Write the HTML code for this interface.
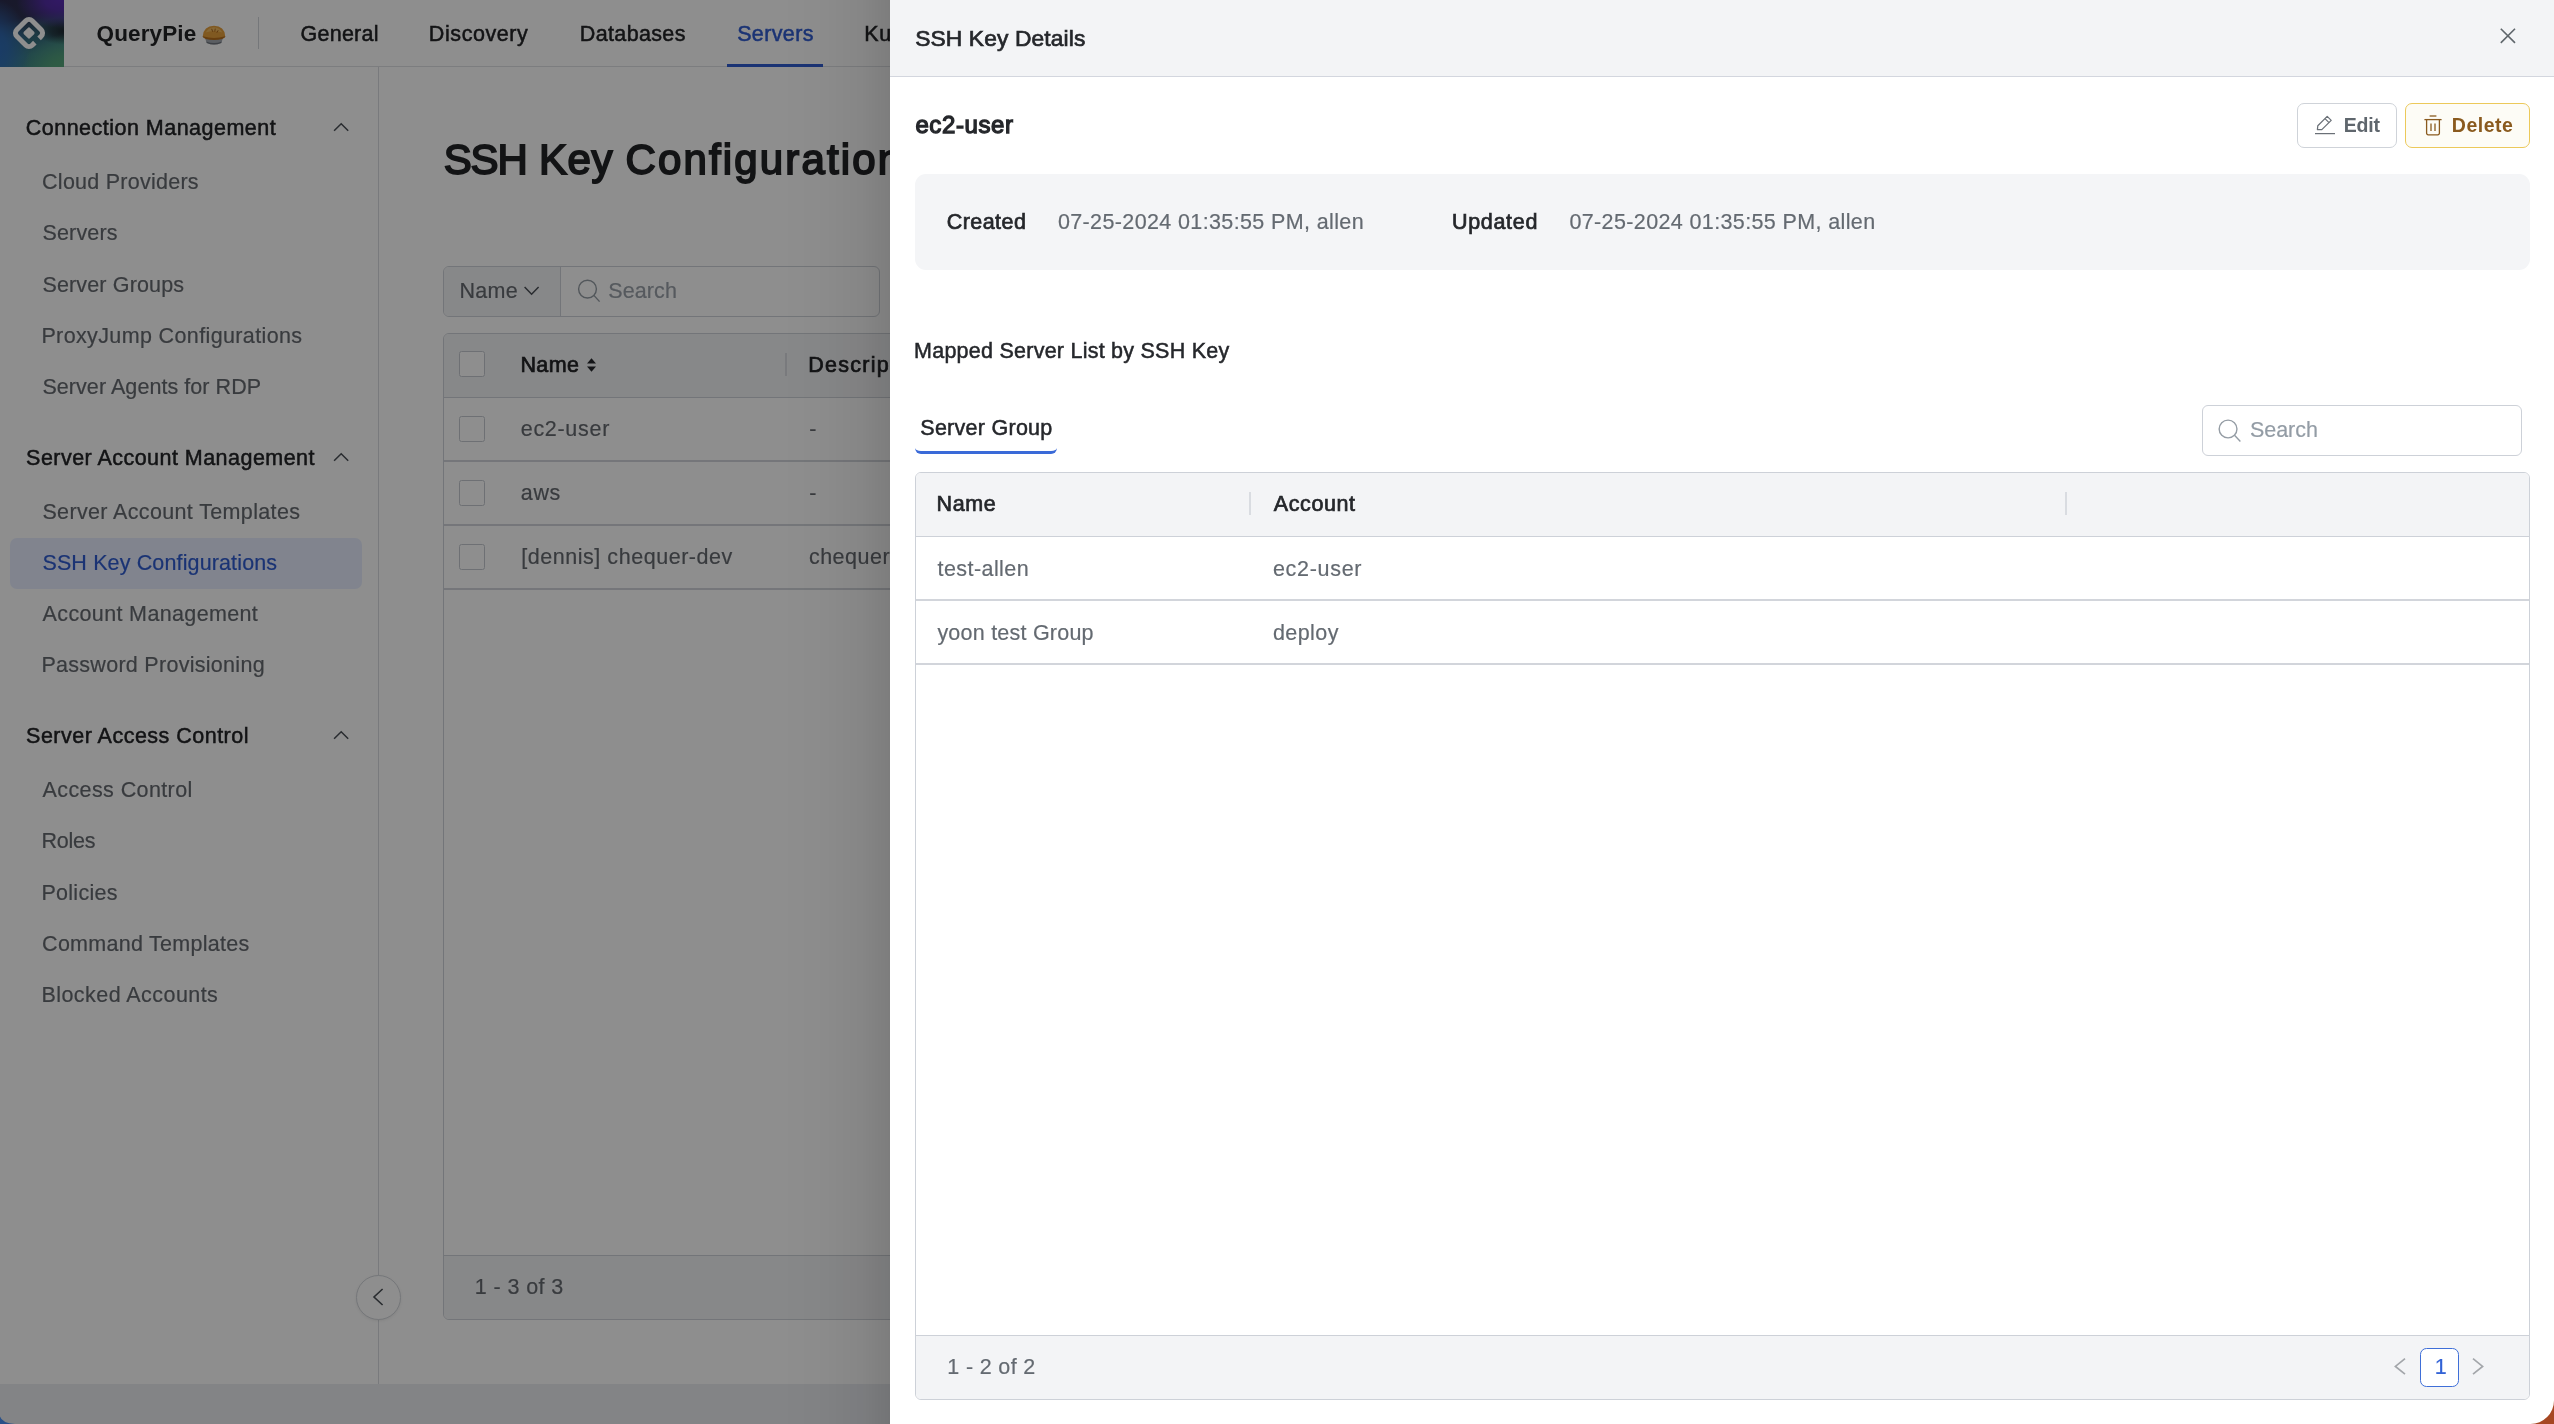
<!DOCTYPE html>
<html lang="en">
<head>
<meta charset="utf-8">
<title>SSH Key Configurations - QueryPie</title>
<style>
*{box-sizing:border-box;margin:0;padding:0}
html,body{width:2554px;height:1424px;overflow:hidden;background:#fff;font-family:'Liberation Sans',sans-serif}
.abs,.t,svg.i{position:absolute}
.t{white-space:pre;line-height:1;display:block}
.tl{position:absolute;left:0;top:0;width:2554px;height:1424px;will-change:transform}
#page{position:absolute;left:0;top:0;width:2554px;height:1424px;background:#fff;overflow:hidden}
#overlay{position:absolute;left:0;top:0;width:2554px;height:1424px;background:rgba(0,0,0,.445)}
#shadow{position:absolute;left:780px;top:0;width:110px;height:1424px;background:linear-gradient(90deg,rgba(0,0,0,0) 0%,rgba(0,0,0,.02) 40%,rgba(0,0,0,.06) 75%,rgba(0,0,0,.12) 100%)}
#drawer{position:absolute;left:890px;top:0;width:1664px;height:1424px;background:#fff;overflow:hidden}
#drawer .in{position:absolute;left:-890px;top:0;width:2554px;height:1424px}
.nav{left:0;top:0;width:2554px;height:67px;background:#fff;border-bottom:1px solid #dfe1e5}
.logo{left:0;top:0;width:64px;height:66.5px;background:
 radial-gradient(ellipse 44px 28px at 60px 0px,#5a2db4 0%,rgba(90,45,180,.85) 35%,rgba(90,45,180,0) 100%),
 radial-gradient(ellipse 46px 38px at 68px 72px,#58a878 0%,rgba(88,168,120,.8) 40%,rgba(88,168,120,0) 100%),
 radial-gradient(ellipse 30px 14px at 66px 31px,rgba(28,32,40,.95) 0%,rgba(28,32,40,.6) 50%,rgba(28,32,40,0) 100%),
 radial-gradient(ellipse 38px 52px at -8px 50px,#2f6cbc 0%,rgba(47,108,188,.8) 40%,rgba(47,108,188,0) 100%),
 linear-gradient(165deg,#2c2c4c 0%,#2d3250 28%,#35687a 52%,#3d8088 75%,#3f8a86 100%)}
.vsep{left:257.5px;top:17px;width:1.5px;height:32px;background:#d3d6db}
.navul{left:727px;top:64px;width:96px;height:3px;background:#305cd0}
.side{left:0;top:67px;width:379px;height:1317px;border-right:1px solid #d9dce0;background:#fff}
.sel{left:10px;top:538px;width:352px;height:51px;border-radius:7px;background:#e7eeff}
.sgroup{left:443px;top:266px;width:437px;height:51px;border:1px solid #cfd3d9;border-radius:6px;background:#fff;overflow:hidden}
.sgroup .l{position:absolute;left:0;top:0;width:117px;height:49px;background:#f3f4f6;border-right:1px solid #cfd3d9}
.mtable{left:443px;top:333px;width:2060px;height:987px;border:1px solid #cfd3d9;border-radius:6px;background:#fff;overflow:hidden}
.mtable .h{position:absolute;left:0;top:0;width:100%;height:64px;background:#f3f4f6;border-bottom:1px solid #cfd3d9}
.mtable .r{position:absolute;left:0;width:100%;height:2px;background:#d2d5db}
.mtable .f{position:absolute;left:0;top:921px;width:100%;height:64px;background:#f3f4f6;border-top:1px solid #cfd3d9}
.cb{width:26px;height:26px;border:1px solid #c6cad1;border-radius:2.5px;background:#fff;left:459px}
.csep{width:2px;height:23px;background:#d9dce1}
.circ{left:356px;top:1275px;width:45px;height:45px;border-radius:50%;background:#fff;border:1px solid #d3d6db;box-shadow:0 1px 3px rgba(0,0,0,.08)}
.bbar{left:0;top:1384px;width:2554px;height:40px;background:#ebedf1}
/* drawer */
.dh{left:890px;top:0;width:1664px;height:77px;background:#f3f4f6;border-bottom:1.5px solid #d3d6de}
.btn{top:103px;height:45px;border-radius:7px}
.bedit{left:2297px;width:99.5px;border:1.5px solid #cfd3d9;background:#fff}
.bdel{left:2405px;width:125px;border:1.5px solid #ecc95a;background:#fdfcf6}
.info{left:915px;top:174px;width:1615px;height:96px;border-radius:11px;background:#f4f5f7}
.tabul{left:915px;top:442px;width:142px;height:12px;border-bottom:3px solid #3a6ad8;border-radius:0 0 6px 6px}
.dsearch{left:2202px;top:405px;width:320px;height:51px;border:1px solid #cdd1d8;border-radius:6px;background:#fff}
.dtable{left:915px;top:472px;width:1615px;height:928px;border:1px solid #cdd1d8;border-radius:6px;background:#fff;overflow:hidden}
.dtable .h{position:absolute;left:0;top:0;width:100%;height:64px;background:#f3f4f6;border-bottom:1px solid #cdd1d8}
.dtable .r{position:absolute;left:0;width:100%;height:2px;background:#d2d5db}
.dtable .f{position:absolute;left:0;top:862px;width:100%;height:64px;background:#f3f4f6;border-top:1px solid #cdd1d8}
.pg{left:2420px;top:1348px;width:39px;height:39px;border:1.5px solid #3f6fd8;border-radius:6.5px;background:#fff}
.corner{position:absolute;bottom:0;width:24px;height:24px}
</style>
</head>
<body>
<div id="page">
  <div class="abs nav"></div>
  <div class="abs logo"></div>
  <svg class="i" style="left:11px;top:15px" width="36" height="36" viewBox="-18 -18 36 36" aria-label="QueryPie logo">
    <g transform="rotate(45)" fill="none" stroke="#fff" stroke-width="5">
      <path d="M10.9 2.7 V6.4 A4.5 4.5 0 0 1 6.4 10.9 H-6.4 A4.5 4.5 0 0 1 -10.9 6.4 V-6.4 A4.5 4.5 0 0 1 -6.4 -10.9 H6.4 A4.5 4.5 0 0 1 10.9 -6.4 V-3.3"/>
      <rect x="-4.4" y="-4.4" width="8.8" height="8.8" rx="1.6" fill="#fff" stroke="none"/>
    </g>
  </svg>
  <!-- pie emoji drawn as svg -->
  <svg class="i" style="left:201px;top:24px" width="26" height="24" viewBox="0 0 26 24" role="img" aria-label="🥧">
    <path d="M3.4 12.5 L5.8 19 Q13 22.2 20.2 19 L22.6 12.5 Z" fill="#a3a9b1"/>
    <path d="M5.2 17.4 Q13 20.8 20.8 17.4 L20.2 19 Q13 22.2 5.8 19Z" fill="#70767e"/>
    <ellipse cx="13" cy="12.6" rx="11.4" ry="3.4" fill="#b9701c"/>
    <path d="M1.8 12.2 Q2.6 2 13 1.8 Q23.4 2 24.2 12.2 Q13 15.6 1.8 12.2Z" fill="#e6a03c"/>
    <path d="M4.6 8.6 Q7 3.6 13 3.2 Q19 3.6 21.4 8.6 Q13 5.6 4.6 8.6Z" fill="#f3c065" opacity=".85"/>
    <path d="M10.8 5.2l.8 2.2M14.2 5l-.4 2.2M17 6.6l-1 1.8" stroke="#a8601a" stroke-width=".9" fill="none" stroke-linecap="round"/>
  </svg>
  <div class="abs vsep"></div>
  <div class="abs navul"></div>
  <div class="abs side"></div>
  <div class="abs sel"></div>
  <!-- sidebar chevrons -->
  <svg class="i" style="left:333px;top:121px" width="16" height="12" viewBox="0 0 16 12"><path d="M1.1 9.8 L8.2 2.8 L15.2 9.8" fill="none" stroke="#4b5057" stroke-width="1.55"/></svg>
  <svg class="i" style="left:333px;top:451px" width="16" height="12" viewBox="0 0 16 12"><path d="M1.1 9.8 L8.2 2.8 L15.2 9.8" fill="none" stroke="#4b5057" stroke-width="1.55"/></svg>
  <svg class="i" style="left:333px;top:729px" width="16" height="12" viewBox="0 0 16 12"><path d="M1.1 9.8 L8.2 2.8 L15.2 9.8" fill="none" stroke="#4b5057" stroke-width="1.55"/></svg>
  <!-- search group -->
  <div class="abs sgroup"><div class="l"></div></div>
  <svg class="i" style="left:523px;top:284px" width="17" height="14" viewBox="0 0 17 14"><path d="M1.6 3 L8.6 10.2 L15.6 3" fill="none" stroke="#4a4f56" stroke-width="1.5"/></svg>
  <svg class="i" style="left:576px;top:278px" width="26" height="26" viewBox="0 0 26 26"><circle cx="11.5" cy="11.1" r="8.9" fill="none" stroke="#949ca4" stroke-width="1.4"/><path d="M17.9 17.4 L23.6 23.6" stroke="#949ca4" stroke-width="1.4" fill="none"/></svg>
  <!-- main table -->
  <div class="abs mtable"><div class="h"></div>
    <div class="r" style="top:126px"></div><div class="r" style="top:190px"></div><div class="r" style="top:254px"></div>
    <div class="f"></div></div>
  <div class="abs cb" style="top:351px"></div>
  <div class="abs cb" style="top:416px"></div>
  <div class="abs cb" style="top:480px"></div>
  <div class="abs cb" style="top:544px"></div>
  <svg class="i" style="left:586px;top:357px" width="11" height="16" viewBox="0 0 11 16"><path d="M5.5 1.2 L10 6.4 H1Z M5.5 14.8 L10 9.6 H1Z" fill="#25272b"/></svg>
  <div class="abs csep" style="left:785px;top:353px"></div>
  <div class="abs circ"></div>
  <svg class="i" style="left:370px;top:1287px" width="16" height="20" viewBox="0 0 16 20"><path d="M12.6 2 L4 10 L12.6 18" fill="none" stroke="#4a4f55" stroke-width="1.6"/></svg>
  <div class="abs bbar"></div>
<div class="tl">
<span class="t" id="t0" style="left:96.60px;top:23.45px;font-size:22.5px;font-weight:700;color:#232427;letter-spacing:0.109px;">QueryPie</span>
<span class="t" id="t1" style="left:300.54px;top:23.70px;font-size:21.5px;font-weight:400;color:#232427;letter-spacing:0.239px;-webkit-text-stroke:0.5px #232427;">General</span>
<span class="t" id="t2" style="left:428.87px;top:23.70px;font-size:21.5px;font-weight:400;color:#232427;letter-spacing:0.575px;-webkit-text-stroke:0.5px #232427;">Discovery</span>
<span class="t" id="t3" style="left:579.87px;top:23.70px;font-size:21.5px;font-weight:400;color:#232427;letter-spacing:0.346px;-webkit-text-stroke:0.5px #232427;">Databases</span>
<span class="t" id="t4" style="left:737.18px;top:23.70px;font-size:21.5px;font-weight:400;color:#305cd0;letter-spacing:0.362px;-webkit-text-stroke:0.5px #305cd0;">Servers</span>
<span class="t" id="t5" style="left:864.27px;top:23.70px;font-size:21.5px;font-weight:400;color:#232427;letter-spacing:0.765px;-webkit-text-stroke:0.5px #232427;">Kubernetes</span>
<span class="t" id="t6" style="left:25.74px;top:117.70px;font-size:21.5px;font-weight:400;color:#232427;letter-spacing:0.485px;-webkit-text-stroke:0.5px #232427;">Connection Management</span>
<span class="t" id="t7" style="left:26.08px;top:447.70px;font-size:21.5px;font-weight:400;color:#232427;letter-spacing:0.465px;-webkit-text-stroke:0.5px #232427;">Server Account Management</span>
<span class="t" id="t8" style="left:26.08px;top:725.70px;font-size:21.5px;font-weight:400;color:#232427;letter-spacing:0.486px;-webkit-text-stroke:0.5px #232427;">Server Access Control</span>
<span class="t" id="t9" style="left:42.09px;top:171.70px;font-size:21.5px;font-weight:400;color:#666a70;letter-spacing:0.252px;-webkit-text-stroke:0.2px #666a70;">Cloud Providers</span>
<span class="t" id="t10" style="left:42.43px;top:223.40px;font-size:21.5px;font-weight:400;color:#666a70;letter-spacing:0.178px;-webkit-text-stroke:0.2px #666a70;">Servers</span>
<span class="t" id="t11" style="left:42.43px;top:274.90px;font-size:21.5px;font-weight:400;color:#666a70;letter-spacing:0.153px;-webkit-text-stroke:0.2px #666a70;">Server Groups</span>
<span class="t" id="t12" style="left:41.42px;top:325.70px;font-size:21.5px;font-weight:400;color:#666a70;letter-spacing:0.370px;-webkit-text-stroke:0.2px #666a70;">ProxyJump Configurations</span>
<span class="t" id="t13" style="left:42.43px;top:376.70px;font-size:21.5px;font-weight:400;color:#666a70;letter-spacing:0.061px;-webkit-text-stroke:0.2px #666a70;">Server Agents for RDP</span>
<span class="t" id="t14" style="left:42.43px;top:501.70px;font-size:21.5px;font-weight:400;color:#666a70;letter-spacing:0.356px;-webkit-text-stroke:0.2px #666a70;">Server Account Templates</span>
<span class="t" id="t15" style="left:42.43px;top:552.70px;font-size:21.5px;font-weight:400;color:#305cd0;letter-spacing:0.134px;-webkit-text-stroke:0.2px #305cd0;">SSH Key Configurations</span>
<span class="t" id="t16" style="left:42.60px;top:603.70px;font-size:21.5px;font-weight:400;color:#666a70;letter-spacing:0.357px;-webkit-text-stroke:0.2px #666a70;">Account Management</span>
<span class="t" id="t17" style="left:41.42px;top:654.70px;font-size:21.5px;font-weight:400;color:#666a70;letter-spacing:0.285px;-webkit-text-stroke:0.2px #666a70;">Password Provisioning</span>
<span class="t" id="t18" style="left:42.60px;top:779.70px;font-size:21.5px;font-weight:400;color:#666a70;letter-spacing:0.395px;-webkit-text-stroke:0.2px #666a70;">Access Control</span>
<span class="t" id="t19" style="left:41.42px;top:830.70px;font-size:21.5px;font-weight:400;color:#666a70;letter-spacing:-0.204px;-webkit-text-stroke:0.2px #666a70;">Roles</span>
<span class="t" id="t20" style="left:41.42px;top:883.10px;font-size:21.5px;font-weight:400;color:#666a70;letter-spacing:0.295px;-webkit-text-stroke:0.2px #666a70;">Policies</span>
<span class="t" id="t21" style="left:42.09px;top:933.90px;font-size:21.5px;font-weight:400;color:#666a70;letter-spacing:0.271px;-webkit-text-stroke:0.2px #666a70;">Command Templates</span>
<span class="t" id="t22" style="left:41.42px;top:985.20px;font-size:21.5px;font-weight:400;color:#666a70;letter-spacing:0.450px;-webkit-text-stroke:0.2px #666a70;">Blocked Accounts</span>
<span class="t" id="t23" style="left:443.69px;top:139.35px;font-size:42px;font-weight:400;color:#232427;letter-spacing:-1.164px;-webkit-text-stroke:1.8059999999999998px #232427;">SSH</span>
<span class="t" id="t24" style="left:539.02px;top:139.35px;font-size:42px;font-weight:400;color:#232427;letter-spacing:0.552px;-webkit-text-stroke:1.8059999999999998px #232427;">Key</span>
<span class="t" id="t25" style="left:625.53px;top:139.35px;font-size:42px;font-weight:400;color:#232427;letter-spacing:2.142px;-webkit-text-stroke:1.8059999999999998px #232427;">Configurations</span>
<span class="t" id="t26" style="left:459.42px;top:281.00px;font-size:21.5px;font-weight:400;color:#666a70;letter-spacing:0.333px;-webkit-text-stroke:0.2px #666a70;">Name</span>
<span class="t" id="t27" style="left:608.23px;top:281.00px;font-size:21.5px;font-weight:400;color:#9aa1a9;letter-spacing:0.111px;-webkit-text-stroke:0.2px #9aa1a9;">Search</span>
<span class="t" id="t28" style="left:520.47px;top:355.30px;font-size:21.5px;font-weight:400;color:#232427;letter-spacing:0.367px;-webkit-text-stroke:0.7px #232427;">Name</span>
<span class="t" id="t29" style="left:808.27px;top:355.30px;font-size:21.5px;font-weight:400;color:#232427;letter-spacing:1.264px;-webkit-text-stroke:0.7px #232427;">Description</span>
<span class="t" id="t30" style="left:520.73px;top:419.40px;font-size:21.5px;font-weight:400;color:#666a70;letter-spacing:0.704px;-webkit-text-stroke:0.2px #666a70;">ec2-user</span>
<span class="t" id="t31" style="left:520.73px;top:483.40px;font-size:21.5px;font-weight:400;color:#666a70;letter-spacing:0.705px;-webkit-text-stroke:0.2px #666a70;">aws</span>
<span class="t" id="t32" style="left:521.16px;top:547.40px;font-size:21.5px;font-weight:400;color:#666a70;letter-spacing:0.545px;-webkit-text-stroke:0.2px #666a70;">[dennis] chequer-dev</span>
<span class="t" id="t33" style="left:809.23px;top:419.40px;font-size:21.5px;font-weight:400;color:#666a70;letter-spacing:0.000px;-webkit-text-stroke:0.2px #666a70;">-</span>
<span class="t" id="t34" style="left:809.23px;top:483.40px;font-size:21.5px;font-weight:400;color:#666a70;letter-spacing:0.000px;-webkit-text-stroke:0.2px #666a70;">-</span>
<span class="t" id="t35" style="left:808.93px;top:547.40px;font-size:21.5px;font-weight:400;color:#666a70;letter-spacing:0.495px;-webkit-text-stroke:0.2px #666a70;">chequer-dev</span>
<span class="t" id="t36" style="left:474.76px;top:1276.70px;font-size:21.5px;font-weight:400;color:#666a70;letter-spacing:0.407px;-webkit-text-stroke:0.2px #666a70;">1 - 3 of 3</span>
</div>
</div>
<div id="overlay"></div>
<div id="shadow"></div>
<div id="drawer"><div class="in">
  <div class="abs dh"></div>
  <svg class="i" style="left:2499px;top:27px" width="18" height="18" viewBox="0 0 18 18"><path d="M1.8 1.7 L16 15.9 M16 1.7 L1.8 15.9" stroke="#5f666b" stroke-width="1.6" fill="none"/></svg>
  <div class="abs btn bedit"></div>
  <div class="abs btn bdel"></div>
  <!-- edit icon -->
  <svg class="i" style="left:2314px;top:114px" width="23" height="22" viewBox="0 0 23 22"><g fill="none" stroke="#6a7077" stroke-width="1.25" stroke-linejoin="round"><path d="M3.4 15.6 L3.8 11.8 L13.2 2.4 L17.2 6.4 L7.8 15.6 Z"/><path d="M11 4.6 L15 8.6"/><path d="M1 19.6 H21"/></g></svg>
  <!-- trash icon -->
  <svg class="i" style="left:2423px;top:113.5px" width="20" height="23" viewBox="0 0 20 23"><g fill="none" stroke="#8a5a1e" stroke-width="1.3"><path d="M6.6 2 H13.4"/><path d="M1.4 5.6 H18.6"/><path d="M3.6 5.6 V19.2 A1.6 1.6 0 0 0 5.2 20.8 H14.8 A1.6 1.6 0 0 0 16.4 19.2 V5.6"/><path d="M8 9.4 V17 M12 9.4 V17"/></g></svg>
  <div class="abs info"></div>
  <div class="abs tabul"></div>
  <div class="abs dsearch"></div>
  <svg class="i" style="left:2217px;top:418px" width="26" height="26" viewBox="0 0 26 26"><circle cx="11.05" cy="11" r="8.9" fill="none" stroke="#949ca4" stroke-width="1.4"/><path d="M17.5 17.3 L23.4 23.4" stroke="#949ca4" stroke-width="1.4" fill="none"/></svg>
  <div class="abs dtable"><div class="h"></div>
    <div class="r" style="top:126px"></div><div class="r" style="top:190px"></div>
    <div class="f"></div></div>
  <div class="abs csep" style="left:1249px;top:492px"></div>
  <div class="abs csep" style="left:2065px;top:492px"></div>
  <div class="abs pg"></div>
  <svg class="i" style="left:2393px;top:1357px" width="14" height="19" viewBox="0 0 14 19"><path d="M12 1.6 L2.4 9.4 L12 17.2" fill="none" stroke="#a3a6aa" stroke-width="1.7"/></svg>
  <svg class="i" style="left:2471px;top:1357px" width="14" height="19" viewBox="0 0 14 19"><path d="M2 1.6 L11.6 9.4 L2 17.2" fill="none" stroke="#a3a6aa" stroke-width="1.7"/></svg>
<div class="tl">
<span class="t" id="t37" style="left:915.14px;top:27.40px;font-size:22.8px;font-weight:400;color:#25272b;letter-spacing:0.121px;-webkit-text-stroke:0.7px #25272b;">SSH Key Details</span>
<span class="t" id="t38" style="left:915.40px;top:112.98px;font-size:24px;font-weight:400;color:#25272b;letter-spacing:0.599px;-webkit-text-stroke:1.296px #25272b;">ec2-user</span>
<span class="t" id="t39" style="left:2343.78px;top:115.89px;font-size:19.5px;font-weight:700;color:#5f666d;letter-spacing:-0.172px;">Edit</span>
<span class="t" id="t40" style="left:2451.78px;top:115.89px;font-size:19.5px;font-weight:700;color:#8a5a1e;letter-spacing:0.535px;">Delete</span>
<span class="t" id="t41" style="left:946.84px;top:211.70px;font-size:21.5px;font-weight:400;color:#25272b;letter-spacing:0.421px;-webkit-text-stroke:0.7px #25272b;">Created</span>
<span class="t" id="t42" style="left:1057.93px;top:211.70px;font-size:21.5px;font-weight:400;color:#646a71;letter-spacing:0.373px;-webkit-text-stroke:0.2px #646a71;">07-25-2024 01:35:55 PM, allen</span>
<span class="t" id="t43" style="left:1452.01px;top:211.70px;font-size:21.5px;font-weight:400;color:#25272b;letter-spacing:0.677px;-webkit-text-stroke:0.7px #25272b;">Updated</span>
<span class="t" id="t44" style="left:1569.43px;top:211.70px;font-size:21.5px;font-weight:400;color:#646a71;letter-spacing:0.373px;-webkit-text-stroke:0.2px #646a71;">07-25-2024 01:35:55 PM, allen</span>
<span class="t" id="t45" style="left:914.07px;top:340.70px;font-size:21.5px;font-weight:400;color:#25272b;letter-spacing:0.245px;-webkit-text-stroke:0.5px #25272b;">Mapped Server List by SSH Key</span>
<span class="t" id="t46" style="left:920.28px;top:417.70px;font-size:21.5px;font-weight:400;color:#25272b;letter-spacing:0.272px;-webkit-text-stroke:0.5px #25272b;">Server Group</span>
<span class="t" id="t47" style="left:2249.93px;top:419.70px;font-size:21.5px;font-weight:400;color:#939ca5;letter-spacing:-0.029px;-webkit-text-stroke:0.2px #939ca5;">Search</span>
<span class="t" id="t48" style="left:936.47px;top:493.70px;font-size:21.5px;font-weight:400;color:#25272b;letter-spacing:0.667px;-webkit-text-stroke:0.7px #25272b;">Name</span>
<span class="t" id="t49" style="left:1273.85px;top:493.70px;font-size:21.5px;font-weight:400;color:#25272b;letter-spacing:0.590px;-webkit-text-stroke:0.7px #25272b;">Account</span>
<span class="t" id="t50" style="left:937.60px;top:558.70px;font-size:21.5px;font-weight:400;color:#646a71;letter-spacing:0.419px;-webkit-text-stroke:0.2px #646a71;">test-allen</span>
<span class="t" id="t51" style="left:1272.93px;top:558.70px;font-size:21.5px;font-weight:400;color:#646a71;letter-spacing:0.704px;-webkit-text-stroke:0.2px #646a71;">ec2-user</span>
<span class="t" id="t52" style="left:937.40px;top:622.70px;font-size:21.5px;font-weight:400;color:#646a71;letter-spacing:0.228px;-webkit-text-stroke:0.2px #646a71;">yoon test Group</span>
<span class="t" id="t53" style="left:1272.93px;top:622.70px;font-size:21.5px;font-weight:400;color:#646a71;letter-spacing:0.423px;-webkit-text-stroke:0.2px #646a71;">deploy</span>
<span class="t" id="t54" style="left:947.26px;top:1356.70px;font-size:21.5px;font-weight:400;color:#646a71;letter-spacing:0.351px;-webkit-text-stroke:0.2px #646a71;">1 - 2 of 2</span>
<span class="t" id="t55" style="left:2434.66px;top:1357.30px;font-size:21.5px;font-weight:400;color:#3363d6;letter-spacing:0.000px;-webkit-text-stroke:0.2px #3363d6;">1</span>
</div>
</div></div>
<!-- window corners -->
<svg class="corner" style="left:0" viewBox="0 0 24 24"><path d="M0 16.5 Q2 23 15 24 L0 24Z" fill="#2a5088"/></svg>
<svg class="corner" style="right:0;width:26px;height:26px" viewBox="0 0 26 26"><path d="M26 2.5 A23.5 23.5 0 0 1 2.5 26 L26 26Z" fill="#a64722"/></svg>
</body>
</html>
